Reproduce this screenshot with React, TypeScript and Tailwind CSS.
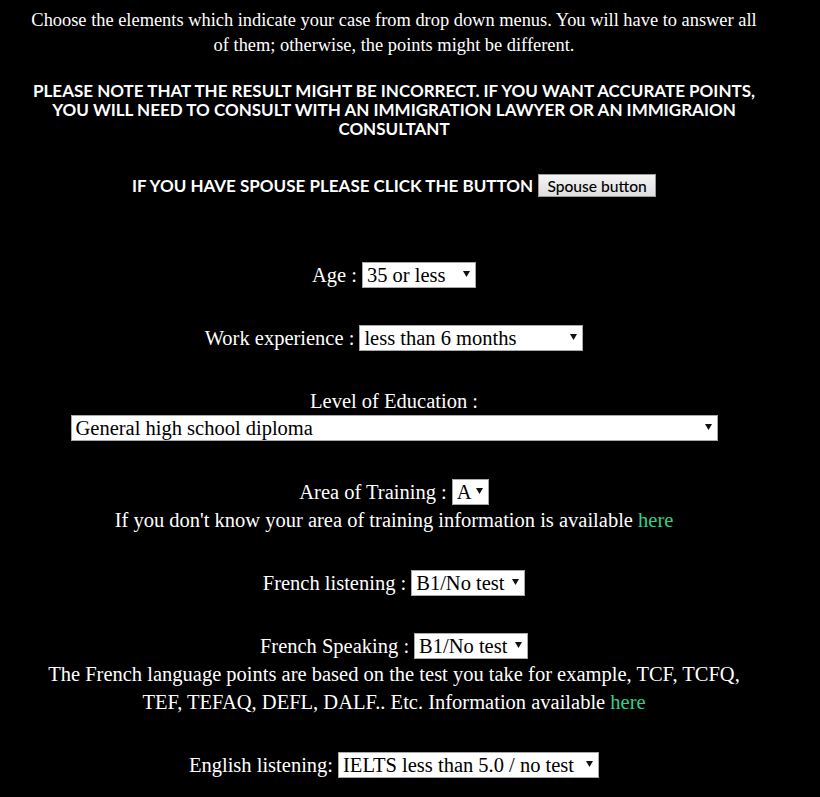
import { useState } from "react";

type Opt = { value: string; label: string };

const Dropdown = ({
  options,
  width,
}: {
  options: Opt[];
  width: string;
}) => {
  const [val, setVal] = useState(options[0].value);
  return (
    <span className={`relative block ${width}`}>
      <select
        value={val}
        onChange={(e) => setVal(e.target.value)}
        className="block appearance-none w-full h-[26px] bg-white border border-[#a9a9a9] pl-[4px] pr-[12px] text-black text-[20.5px] leading-[24px] font-['Liberation_Serif',serif] outline-none"
      >
        {options.map((o) => (
          <option key={o.value} value={o.value}>
            {o.label}
          </option>
        ))}
      </select>
      {/* little arrow */}
      <svg
        className="absolute right-[6px] top-[9px] pointer-events-none"
        width="7"
        height="6"
        viewBox="0 0 7 6"
      >
        <polygon points="0,0 7,0 3.5,6" fill="#111" />
      </svg>
    </span>
  );
};

const Row = ({ label, children }: { label: string; children: React.ReactNode }) => (
  <div className="leading-[28px] h-[28px] flex items-center justify-center gap-[5px]">
    <span>{label}</span>
    {children}
  </div>
);

const Link = () => (
  <a href="#" className="text-[#2fd08a]">
    here
  </a>
);

export default function App() {
  return (
    <div className="min-h-[797px] bg-black text-white font-['Liberation_Serif',serif] text-[20.5px]">
      <div className="w-[788px] pt-[8px] text-center">
        {/* Intro */}
        <p className="text-[18.4px] leading-[25px]">
          Choose the elements which indicate your case from drop down menus. You will have to answer all
          <br />
          of them; otherwise, the points might be different.
        </p>

        <h2 className="mt-[23px] font-['Lato',sans-serif] font-bold text-[17px] leading-[19px]">
          PLEASE NOTE THAT THE RESULT MIGHT BE INCORRECT. IF YOU WANT ACCURATE POINTS,
          <br />
          YOU WILL NEED TO CONSULT WITH AN IMMIGRATION LAWYER OR AN IMMIGRAION
          <br />
          CONSULTANT
        </h2>

        <div className="mt-[35px] flex items-center justify-center gap-[5px] h-[25px]">
          <span className="font-['Lato',sans-serif] font-bold text-[17px]">
            IF YOU HAVE SPOUSE PLEASE CLICK THE BUTTON
          </span>
          <button className="h-[23px] w-[118px] bg-gradient-to-b from-[#f4f4f4] to-[#dedede] border border-[#9a9a9a] text-black text-[15.6px] leading-[20px] font-['Lato',sans-serif] font-medium">
            Spouse button
          </button>
        </div>

        <div className="mt-[63px] flex flex-col gap-[35px]">
          <Row label="Age :">
            <Dropdown
              width="w-[114px]"
              options={[
                { value: "35", label: "35 or less" },
                { value: "36", label: "36" },
                { value: "37", label: "37" },
              ]}
            />
          </Row>

          <Row label="Work experience :">
            <Dropdown
              width="w-[224px]"
              options={[
                { value: "0", label: "less than 6 months" },
                { value: "1", label: "6 months to 1 year" },
              ]}
            />
          </Row>

          <div>
            <div className="leading-[28px]">Level of Education :</div>
            <div className="flex justify-center">
              <Dropdown
                width="w-[647px]"
                options={[
                  { value: "hs", label: "General high school diploma" },
                  { value: "col", label: "College diploma" },
                ]}
              />
            </div>
          </div>

          <div className="mt-[2px]">
            <Row label="Area of Training :">
              <Dropdown
                width="w-[37px]"
                options={[
                  { value: "A", label: "A" },
                  { value: "B", label: "B" },
                  { value: "C", label: "C" },
                ]}
              />
            </Row>
            <p className="leading-[28px]">
              If you don't know your area of training information is available <Link />
            </p>
          </div>

          <Row label="French listening :">
            <Dropdown
              width="w-[114px]"
              options={[
                { value: "b1", label: "B1/No test" },
                { value: "b2", label: "B2" },
              ]}
            />
          </Row>

          <div>
            <Row label="French Speaking :">
              <Dropdown
                width="w-[114px]"
                options={[
                  { value: "b1", label: "B1/No test" },
                  { value: "b2", label: "B2" },
                ]}
              />
            </Row>
            <p className="leading-[28px]">
              The French language points are based on the test you take for example, TCF, TCFQ,
              <br />
              TEF, TEFAQ, DEFL, DALF.. Etc. Information available <Link />
            </p>
          </div>

          <Row label="English listening:">
            <Dropdown
              width="w-[261px]"
              options={[
                { value: "0", label: "IELTS less than 5.0 / no test" },
                { value: "5", label: "IELTS 5.0" },
              ]}
            />
          </Row>
        </div>
      </div>
    </div>
  );
}
